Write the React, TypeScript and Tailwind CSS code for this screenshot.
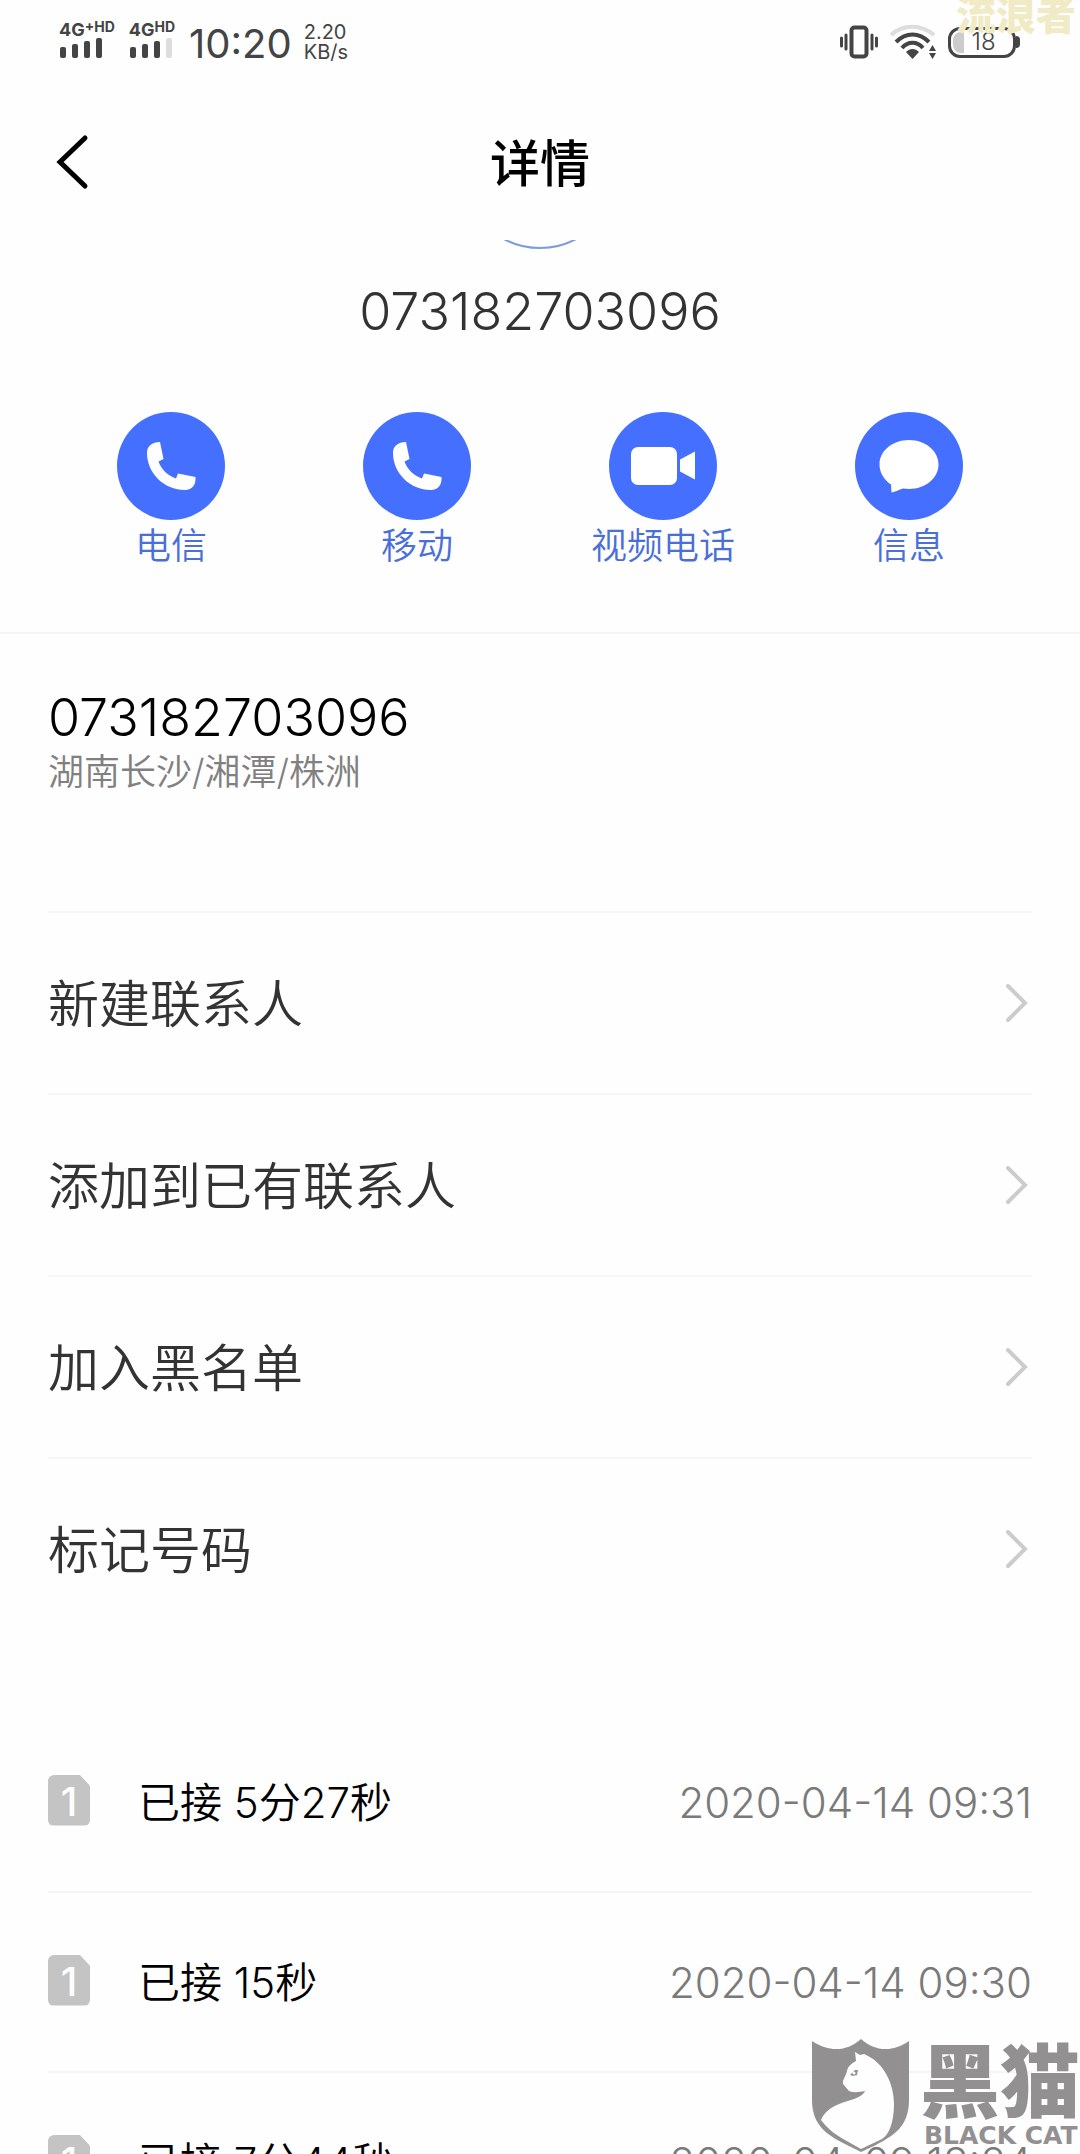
const actions = [
  { label: '电信', icon: 'phone' },
  { label: '移动', icon: 'phone' },
  { label: '视频电话', icon: 'video' },
  { label: '信息', icon: 'message' },
];

const menu = ['新建联系人', '添加到已有联系人', '加入黑名单', '标记号码'];

const calls = [
  { status: '已接 5分27秒', date: '2020-04-14 09:31' },
  { status: '已接 15秒', date: '2020-04-14 09:30' },
  { status: '已接 7分44秒', date: '2020-04-09 18:24' },
];

function ActionIcon({ name }: { name: string }) {
  return (
    <svg viewBox="0 0 108 108" className="size-[108px]" fill="#fff" aria-hidden="true">
      <circle cx="54" cy="54" r="54" fill="#4570ff" />
      {name === 'phone' && (
        <path d="M30 41C30 34 35 30 43 30L46.500 47L41.500 49.500C44 57 51 64 59 66.500L61 61.500L78.500 65C79 73 75 78 68 78C47 78 30 61 30 41Z" />
      )}
      {name === 'video' && (
        <>
          <rect x="22" y="35" width="46" height="38" rx="7" />
          <path d="M71 47.500L86 39.500V67.500L71 59.500Z" />
        </>
      )}
      {name === 'message' && (
        <path d="M54 28C70.500 28 83.500 39 83.500 52.500C83.500 66 70.500 77 54 77L48 76.500C44 78 40 79.500 37 80.500C36 80.500 36.500 76 36 72.500C29 68 24.500 60.500 24.500 52.500C24.500 39 37.500 28 54 28Z" />
      )}
    </svg>
  );
}

function Signal({ label, sup, weak }: { label: string; sup: string; weak?: boolean }) {
  return (
    <div className="flex flex-col">
      <span className="flex items-start font-bold">
        <span className="text-lg leading-4">{label}</span>
        <span className="text-sm leading-[10px]">{sup}</span>
      </span>
      <svg viewBox="0 0 44 20" className="h-5 w-11" fill="#444" aria-hidden="true">
        <rect x="1" y="9" width="6" height="11" rx="2" />
        <rect x="13" y="6" width="6" height="14" rx="2" />
        <rect x="25" y="3" width="6" height="17" rx="2" />
        <rect x="37" y="0" width="6" height="20" rx="2" fill={weak ? '#ddd' : '#444'} />
      </svg>
    </div>
  );
}

function StatusBar() {
  return (
    <div className="flex h-20 items-center justify-between pl-[59px] pr-[60px] text-[#444]">
      <div className="flex items-center">
        <div className="flex gap-[14px]">
          <Signal label="4G" sup="+HD" />
          <Signal label="4G" sup="HD" weak />
        </div>
        <span className="ml-[14px] pt-2 text-[40px] leading-10">10:20</span>
        <div className="ml-3 flex flex-col pt-1 text-xl leading-5">
          <span>2.20</span>
          <span>KB/s</span>
        </div>
      </div>
      <div className="flex items-center gap-3 pt-1">
        <svg viewBox="0 0 40 34" className="h-[34px] w-10" fill="none" stroke="#444" strokeLinecap="round" aria-hidden="true">
          <rect x="13.500" y="2.500" width="15" height="29" rx="3" strokeWidth="4" />
          <path d="M8 10V24M34 10V24" strokeWidth="3" />
          <path d="M3.500 13V21M38.500 13V21" strokeWidth="3" />
        </svg>
        <svg viewBox="0 0 46 36" className="h-9 w-[46px]" fill="none" stroke="#444" strokeWidth="4" aria-hidden="true">
          <path d="M1 11C13 0 31 0 44 11" stroke="#ddd" />
          <path d="M6 18C16 8 29 8 39 18" />
          <path d="M12 24C18 17 27 17 33 24" />
          <path d="M16 28C20 24 25 24 29 28L22.500 35Z" fill="#444" stroke="none" />
          <path d="M39 27L42.500 21L46 27ZM39 29L42.500 35L46 29Z" fill="#444" stroke="none" />
        </svg>
        <div className="flex items-center">
          <div className="flex h-[31px] w-[68px] items-center rounded-xl border-[3px] border-[#444] p-[2px]">
            <span className="h-full w-[11px] rounded-l-lg bg-[#ccc]" />
            <span className="flex-1 pr-2 text-center text-2xl font-light leading-6">18</span>
          </div>
          <span className="h-3 w-1 rounded-r-full bg-[#444]" />
        </div>
      </div>
    </div>
  );
}

function SimBadge() {
  return (
    <span className="mb-1 flex h-[51px] w-[42px] items-center justify-center rounded-md bg-[#c4c4c4] pt-1 text-[40px] font-medium leading-10 text-white [clip-path:polygon(0_0,75%_0,100%_22%,100%_100%,0_100%)]">
      1
    </span>
  );
}

function BlackCatMark() {
  return (
    <div className="absolute bottom-0 right-0 flex h-[116px] items-start text-[#929090]">
      <svg viewBox="0 0 98 114" className="h-[114px] w-[98px]" aria-hidden="true">
        <path fill="#929090" d="M0 3C18 15 36 13 49 1C62 13 80 15 97 3V62C97 90 80 98 64 107L49 114L33 106C15 97 0 87 0 62Z" />
        <path fill="#fefefe" d="M43 14L48 17L52 16C72 24 82 46 82 66C82 84 77 97 70 101L49 111L33 102C22 96 14 89 9 82C15 68 30 65 42 61C49 58 52 56 53 53C47 54 42 55 37 53L31 46C30 42 34 38 35 33C36 28 40 25 44 23Z" />
        <path fill="#929090" d="M38 37L43 32L46 32L45 37L41 38Z" />
        <circle cx="42" cy="35" r="1.500" fill="#fefefe" />
      </svg>
      <div className="ml-[10px] flex flex-col pt-1">
        <span className="text-[80px] font-black leading-[80px]">黑猫</span>
        <span className="pl-1 font-['DejaVu_Sans'] text-[25px] font-bold leading-7">BLACK CAT</span>
      </div>
    </div>
  );
}

export default function App() {
  return (
    <main className="relative h-screen overflow-hidden bg-[#fefefe] font-[Inter,'Noto_Sans_CJK_SC',sans-serif] text-black">
      <StatusBar />
      <span className="absolute right-1 top-0 text-[40px] font-black leading-8 text-[#f0ebc4]">流浪者</span>

      <header className="grid h-40 grid-cols-3 items-center px-12 pt-1">
        <button type="button" aria-label="返回" className="justify-self-start pl-2">
          <svg viewBox="0 0 34 56" className="h-14 w-[34px]" fill="none" stroke="#000" strokeWidth="5" strokeLinecap="round">
            <path d="M29 4L4 28L29 52" />
          </svg>
        </button>
        <h1 className="pt-1 text-center text-[50px] font-medium leading-[60px]">详情</h1>
      </header>

      <section className="flex flex-col items-center border-b-2 border-[#f5f5f5]">
        <svg viewBox="0 0 72 10" className="h-[10px] w-[72px]" fill="none" stroke="#7d9be0" strokeWidth="2" aria-hidden="true">
          <path d="M0 -1C22 11 50 11 72 -1" />
        </svg>
        <p className="mt-8 text-[52px] font-light leading-[60px] text-[#333]">073182703096</p>
        <div className="mt-[70px] grid w-full grid-cols-4 px-12 pb-16">
          {actions.map((action) => (
            <button key={action.label} type="button" className="flex flex-col items-center text-[#4a6fd8]">
              <ActionIcon name={action.icon} />
              <span className="mt-1 text-4xl font-[350] leading-[44px]">{action.label}</span>
            </button>
          ))}
        </div>
      </section>

      <section className="px-12">
        <div className="h-[277px] pt-[54px]">
          <p className="text-[52px] font-light leading-[60px]">073182703096</p>
          <p className="text-4xl font-[350] leading-[48px] text-[#808080]">湖南长沙/湘潭/株洲</p>
        </div>
        {menu.map((item) => (
          <button
            key={item}
            type="button"
            className="flex h-[182px] w-full items-center justify-between border-t-2 border-[#f7f7f7] pr-1 text-[51px] font-[350] text-[#333]"
          >
            <span className="pt-1">{item}</span>
            <svg viewBox="0 0 22 40" className="h-10 w-[22px]" fill="none" stroke="#ccc" strokeWidth="4" strokeLinecap="round" aria-hidden="true">
              <path d="M2 3L19 20L2 37" />
            </svg>
          </button>
        ))}
      </section>

      <ul className="mt-[74px] px-12">
        {calls.map((call) => (
          <li key={call.date} className="flex h-[180px] items-center border-b-2 border-[#f5f5f5]">
            <SimBadge />
            <span className="ml-12 text-[42px] font-[350]">{call.status}</span>
            <time className="ml-auto text-[42px] font-light text-[#7a7a7a]">{call.date}</time>
          </li>
        ))}
      </ul>

      <BlackCatMark />
    </main>
  );
}
